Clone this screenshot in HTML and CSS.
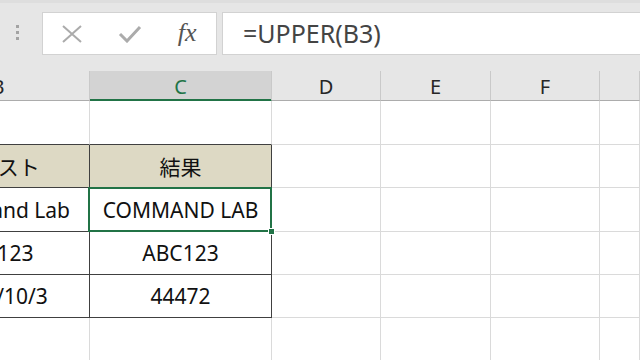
FILE: index.html
```html
<!DOCTYPE html>
<html lang="ja">
<head>
    <meta charset="UTF-8">
    <meta name="viewport" content="width=device-width, initial-scale=1.0">
    <link rel="stylesheet" href="styles.css">
</head>
<body>
    <div class="toolbar">
        <div class="grip"><span></span><span></span><span></span></div>
        <div class="fbuttons">
            <div class="fbtn">
                <svg width="22" height="20" viewBox="0 0 22 20"><path d="M2 2 L20 18 M20 2 L2 18" stroke="#ababab" stroke-width="2" fill="none"/></svg>
            </div>
            <div class="fbtn">
                <svg width="24" height="18" viewBox="0 0 24 18"><path d="M2 9 L9 16 L22 2" stroke="#ababab" stroke-width="3" fill="none"/></svg>
            </div>
            <div class="fbtn fx">fx</div>
        </div>
        <div class="formula">=UPPER(B3)</div>
    </div>

    <div class="sheet">
        <!-- column headers -->
        <div class="cell head">B</div>
        <div class="cell head active">C</div>
        <div class="cell head">D</div>
        <div class="cell head">E</div>
        <div class="cell head">F</div>
        <div class="cell head"></div>

        <!-- row 1 -->
        <div class="cell top"></div>
        <div class="cell top"></div>
        <div class="cell"></div>
        <div class="cell"></div>
        <div class="cell"></div>
        <div class="cell"></div>

        <!-- row 2 -->
        <div class="cell tb th">テキスト</div>
        <div class="cell tb th">結果</div>
        <div class="cell"></div>
        <div class="cell"></div>
        <div class="cell"></div>
        <div class="cell"></div>

        <!-- row 3 -->
        <div class="cell tb">Command Lab</div>
        <div class="cell tb selected">COMMAND LAB</div>
        <div class="cell"></div>
        <div class="cell"></div>
        <div class="cell"></div>
        <div class="cell"></div>

        <!-- row 4 -->
        <div class="cell tb">abc123</div>
        <div class="cell tb">ABC123</div>
        <div class="cell"></div>
        <div class="cell"></div>
        <div class="cell"></div>
        <div class="cell"></div>

        <!-- row 5 -->
        <div class="cell tb">2021/10/3</div>
        <div class="cell tb">44472</div>
        <div class="cell"></div>
        <div class="cell"></div>
        <div class="cell"></div>
        <div class="cell"></div>

        <!-- row 6 -->
        <div class="cell"></div>
        <div class="cell"></div>
        <div class="cell"></div>
        <div class="cell"></div>
        <div class="cell"></div>
        <div class="cell"></div>
    </div>
</body>
</html>
```

FILE: styles.css
```css
body {
    margin: 0;
    width: 640px;
    height: 360px;
    overflow: hidden;
    background: #ffffff;
    font-family: 'Noto Sans', 'Noto Sans CJK JP', sans-serif;
}
.toolbar {
    height: 71px;
    box-sizing: border-box;
    padding-top: 12px;
    display: flex;
    align-items: flex-start;
    background: #e6e6e6;
    border-top: 3px solid #dedede;
    padding-top: 9px;
}
.grip {
    width: 26px;
    padding-left: 16px;
    padding-top: 13px;
    display: flex;
    flex-direction: column;
    gap: 3px;
}
.grip span {
    display: block;
    width: 3px;
    height: 3px;
    background: #a3a3a3;
}
.fbuttons {
    width: 175px;
    height: 43px;
    box-sizing: border-box;
    border: 1px solid #d2d2d2;
    background: #ffffff;
    display: flex;
    align-items: center;
}
.fbtn {
    width: 58px;
    display: flex;
    justify-content: center;
    align-items: center;
}
.fbtn.fx {
    font-family: 'Liberation Serif', serif;
    font-style: italic;
    font-size: 26px;
    color: #555555;
    line-height: 1;
    margin-top: -2px;
}
.formula {
    flex: 1;
    margin-left: 5px;
    height: 43px;
    box-sizing: border-box;
    border: 1px solid #d2d2d2;
    border-right: none;
    background: #ffffff;
    padding-left: 20px;
    font-size: 25px;
    line-height: 40px;
    color: #444444;
}
.sheet {
    display: grid;
    margin-left: -93px;
    width: 733px;
    grid-template-columns: 183px 182px 109px 110px 109px 40px;
    grid-template-rows: 30px 44px 43px 44px 43px 43px 43px;
}
.cell {
    box-sizing: border-box;
    border-right: 1px solid #dadada;
    border-bottom: 1px solid #dadada;
    display: flex;
    align-items: center;
    justify-content: center;
    font-size: 21px;
    color: #111111;
    white-space: nowrap;
}
.head {
    background: #e6e6e6;
    border-right-color: #c9c9c9;
    border-bottom-color: #acacac;
    font-size: 20px;
    color: #262626;
    padding-top: 2px;
}
.head.active {
    background: #d3d3d3;
    color: #217346;
    border-bottom-color: #217346;
    box-shadow: inset 0 -1px 0 #217346;
}
.top {
    border-bottom-color: #404040;
}
.tb {
    border-right-color: #404040;
    border-bottom-color: #404040;
}
.th {
    background: #ddd9c4;
}
.selected {
    position: relative;
}
.selected::before {
    content: '';
    position: absolute;
    top: -1px;
    left: -2px;
    right: -1px;
    bottom: -1px;
    border: 2px solid #217346;
}
.selected::after {
    content: '';
    position: absolute;
    right: -4px;
    bottom: -4px;
    width: 5px;
    height: 5px;
    background: #217346;
    border: 1px solid #ffffff;
}
```
